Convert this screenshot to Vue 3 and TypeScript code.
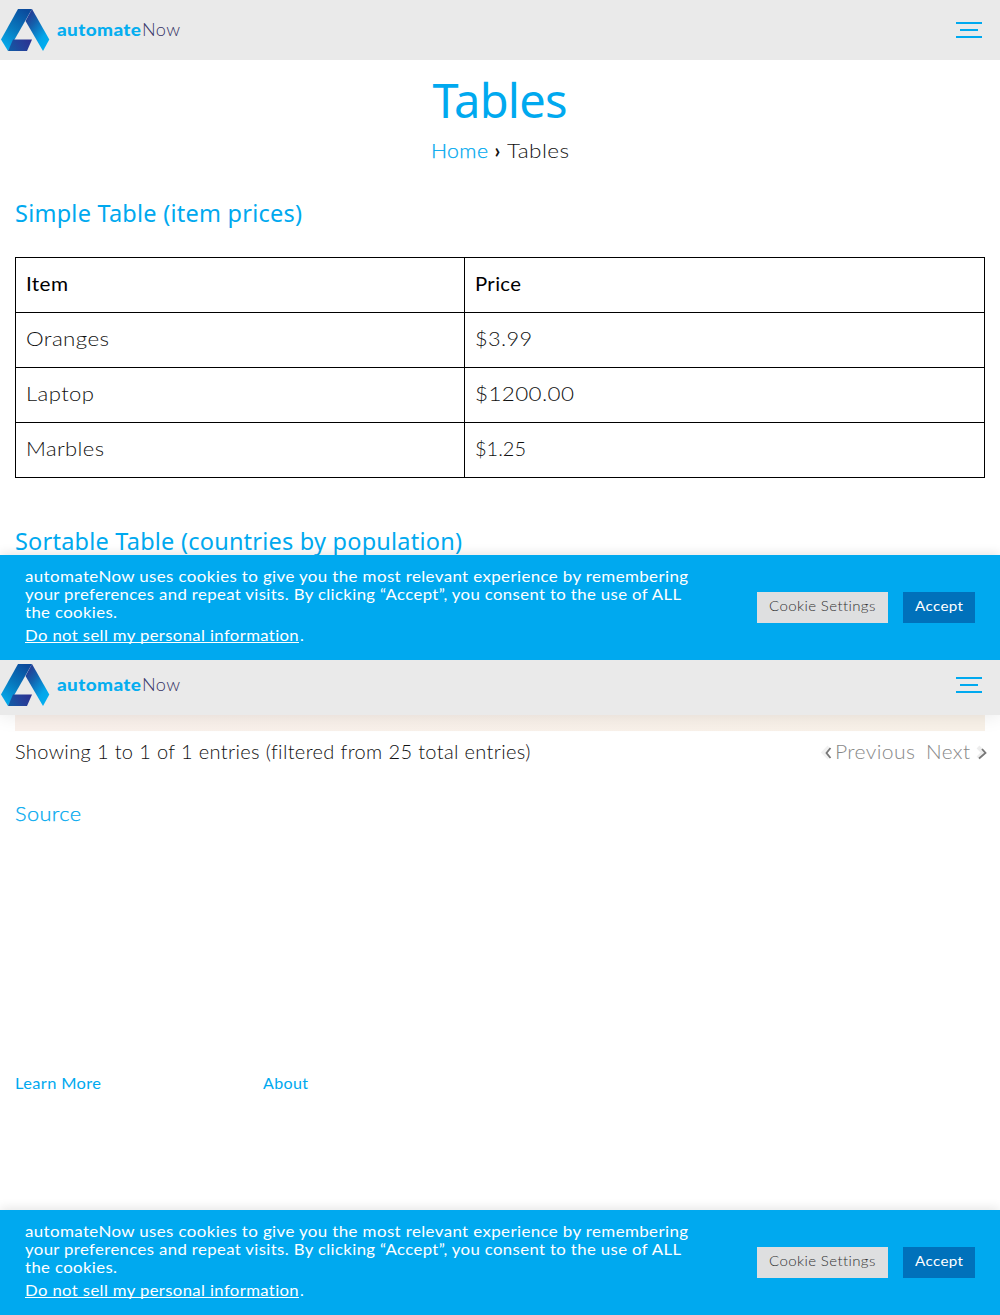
<script setup lang="ts">
import type { Directive } from 'vue'

interface Row {
  item: string
  itemWidth: number
  price: string
  priceWidth: number
}

// Widens a line of text to the given width in pixels: a little tracking first,
// then wider letterforms for whatever is left.
const MAX_TRACKING = 0.35
const vTrack: Directive<HTMLElement, number> = {
  mounted(el, { value }) {
    const count = (el.textContent ?? '').length
    const natural = el.getBoundingClientRect().width
    const spacing = Math.min(MAX_TRACKING, (value - natural) / Math.max(1, count - 1))
    const drawn = natural + spacing * (count - 1)
    el.style.letterSpacing = `${spacing}px`
    el.style.transform = `scaleX(${value / drawn})`
    el.style.marginRight = `${value - natural - spacing * count}px`
  },
}

const rows: Row[] = [
  { item: 'Oranges', itemWidth: 83, price: '$3.99', priceWidth: 57 },
  { item: 'Laptop', itemWidth: 68, price: '$1200.00', priceWidth: 99 },
  { item: 'Marbles', itemWidth: 78, price: '$1.25', priceWidth: 51 },
]

const notice = [
  { text: 'automateNow uses cookies to give you the most relevant experience by remembering', width: 663 },
  { text: 'your preferences and repeat visits. By clicking “Accept”, you consent to the use of ALL', width: 656 },
  { text: 'the cookies.', width: 92 },
]

const views = ['top', 'bottom'] as const
</script>

<template>
  <div class="page">
    <section v-for="view in views" :key="view" class="view" :class="view">
      <header class="bar">
        <a class="brand">
          <svg class="mark" width="50" height="44" viewBox="0 0 50 44">
            <defs>
              <linearGradient :id="view + '-l'" x1=".75" y1="0" x2=".2" y2="1">
                <stop offset="0" stop-color="#0b4a9c" />
                <stop offset=".5" stop-color="#0878bd" />
                <stop offset="1" stop-color="#04aeef" />
              </linearGradient>
              <linearGradient :id="view + '-r'" x1=".1" y1="0" x2=".8" y2="1">
                <stop offset="0" stop-color="#2b2f8c" />
                <stop offset=".35" stop-color="#1460ac" />
                <stop offset=".75" stop-color="#03a5e9" />
                <stop offset="1" stop-color="#00b0f2" />
              </linearGradient>
              <linearGradient :id="view + '-b'" x1="0" y1=".6" x2="1" y2=".3">
                <stop offset="0" stop-color="#125aa5" />
                <stop offset=".5" stop-color="#23439b" />
                <stop offset="1" stop-color="#2b3291" />
              </linearGradient>
            </defs>
            <path d="M18 1h14L8 43 1 31.500z" :fill="`url(#${view}-l)`" />
            <path d="M32 1 49.300 31.500 43 43 25.500 13z" :fill="`url(#${view}-r)`" />
            <path d="M13 31.500h19L27 43H8z" :fill="`url(#${view}-b)`" />
          </svg>
          <span class="name"><b v-track="84" class="t">automate</b><i v-track="38" class="t">Now</i></span>
        </a>
        <button class="menu" aria-label="Menu"><span /><span /><span /></button>
      </header>

      <main v-if="view === 'top'">
        <h1><span v-track="135" class="t">Tables</span></h1>
        <nav class="crumbs">
          <a v-track="57" class="t light">Home</a><span class="sep">›</span><span v-track="62" class="t">Tables</span>
        </nav>
        <h2 class="first"><span v-track="287" class="t">Simple Table (item prices)</span></h2>
        <table>
          <tbody>
            <tr>
              <th><span v-track="42" class="t">Item</span></th>
              <th><span v-track="46" class="t">Price</span></th>
            </tr>
            <tr v-for="row in rows" :key="row.item">
              <td><span v-track="row.itemWidth" class="t">{{ row.item }}</span></td>
              <td><span v-track="row.priceWidth" class="t">{{ row.price }}</span></td>
            </tr>
          </tbody>
        </table>
        <h2><span v-track="447" class="t">Sortable Table (countries by population)</span></h2>
      </main>

      <main v-else>
        <div class="stripe" />
        <div class="table-foot">
          <span v-track="515" class="t">Showing 1 to 1 of 1 entries (filtered from 25 total entries)</span>
          <div class="pager">
            <svg width="12" height="16" viewBox="0 0 12 16" fill="none">
              <path d="M8 2 2.500 7.500 8 13" stroke="#f1f1f1" stroke-width="4" />
              <path d="M9.500 3 5.500 8l4 5" stroke="#777" stroke-width="1.800" />
            </svg>
            <span v-track="80" class="t prev">Previous</span>
            <span v-track="44" class="t next">Next</span>
            <svg width="12" height="16" viewBox="0 0 12 16" fill="none">
              <path d="m3 2 5.500 5.500L3 13" stroke="#ededed" stroke-width="4" />
              <path d="m7 4 3.500 4L4 13.500" stroke="#777" stroke-width="1.800" />
            </svg>
          </div>
        </div>
        <div class="source"><a v-track="66" class="t light">Source</a></div>
        <footer>
          <a v-track="86" class="t">Learn More</a>
          <a v-track="45" class="t">About</a>
        </footer>
      </main>

      <aside class="cookies">
        <div class="copy">
          <div v-for="line in notice" :key="line.text" class="line">
            <span v-track="line.width" class="t">{{ line.text }}</span>
          </div>
          <div class="line optout">
            <a><span v-track="274" class="t">Do not sell my personal information</span></a><span class="dot">.</span>
          </div>
        </div>
        <div class="actions">
          <button class="settings"><span v-track="106" class="t">Cookie Settings</span></button>
          <button class="accept"><span v-track="48" class="t">Accept</span></button>
        </div>
      </aside>
    </section>
  </div>
</template>

<style>
body {
  margin: 0;
  background: #fff;
}
</style>

<style scoped>
* {
  box-sizing: border-box;
}
.page {
  width: 1000px;
  height: 1315px;
  overflow: hidden;
  font-family: Lato, "Liberation Sans", sans-serif;
  font-size: 20px;
  font-weight: 300;
  line-height: 30px;
  color: #111;
}
.view {
  display: flex;
  flex-direction: column;
  overflow: hidden;
}
.top {
  height: 660px;
}
.bottom {
  height: 655px;
}
main {
  flex: 1;
  min-height: 0;
  padding: 0 15px;
}
.t {
  display: inline-block;
  white-space: nowrap;
  transform-origin: 0 50%;
}
a {
  color: #00a9ef;
}
.light {
  -webkit-text-stroke: 0.25px #00a9ef;
}
.bar {
  flex: none;
  height: 60px;
  display: flex;
  align-items: flex-start;
  justify-content: space-between;
  background: #eaeaea;
  padding: 8px 18px 0 0;
}
.bottom .bar {
  height: 55px;
  padding-top: 3px;
  box-shadow: 0 0 20px rgba(0, 0, 0, 0.1);
  position: relative;
}
.brand {
  display: flex;
}
.mark {
  display: block;
}
.name {
  margin: 7px 0 0 7px;
  font-size: 17px;
  line-height: 30px;
  display: flex;
}
.name b {
  font-weight: 900;
  color: #05aef0;
}
.name i {
  font-style: normal;
  font-weight: 300;
  color: #363567;
  margin-left: 1px;
}
.menu {
  width: 26px;
  margin-top: 14px;
  padding: 0;
  border: 0;
  background: none;
  display: flex;
  flex-direction: column;
  align-items: center;
  gap: 5px;
}
.menu span {
  width: 26px;
  height: 2px;
  background: #00a9ef;
}
.menu span:nth-child(2) {
  width: 18px;
}
h1,
h2 {
  margin: 0;
  font-family: "Noto Sans", sans-serif;
  font-weight: 400;
  color: #00a9ef;
}
h1 {
  font-size: 47px;
  line-height: 60px;
  padding-top: 10px;
  text-align: center;
}
.crumbs {
  margin-top: 5px;
  display: flex;
  justify-content: center;
}
.sep {
  width: 20px;
  text-align: center;
  font-weight: 700;
}
h2 {
  font-size: 23.5px;
  line-height: 30px;
  margin-top: 48px;
}
h2.first {
  margin-top: 33px;
}
table {
  width: 970px;
  margin-top: 29px;
  border-collapse: collapse;
  table-layout: fixed;
}
th,
td {
  height: 55px;
  border: 1px solid #000;
  padding: 0 0 4px 10px;
  line-height: 50px;
  text-align: left;
}
th {
  font-weight: 400;
  color: #000;
}
th:first-child {
  width: 449px;
}
.cookies {
  flex: none;
  height: 105px;
  padding: 12px 25px 0;
  display: flex;
  justify-content: space-between;
  align-items: flex-start;
  background: #00a9ef;
  box-shadow: 0 -2px 10px rgba(0, 0, 0, 0.1);
  position: relative;
  color: #fff;
  font-size: 16px;
  font-weight: 400;
}
.line {
  height: 18px;
  line-height: 18px;
}
.optout {
  margin-top: 5px;
  display: flex;
}
.optout a {
  color: #fff;
  text-decoration: none;
  height: 17px;
  width: 274px;
  border-bottom: 1px solid #fff;
}
.dot {
  margin-left: 1px;
}
.actions {
  display: flex;
  gap: 15px;
  margin-top: 25px;
}
.actions button {
  height: 31px;
  padding: 0 12px 3px;
  border: 0;
  font-family: inherit;
  font-size: 14px;
  line-height: 28px;
  text-align: left;
}
.settings {
  width: 131px;
  background: #dedfe0;
  color: #333;
  font-weight: 300;
}
.accept {
  width: 72px;
  background: #0071bb;
  color: #fff;
  font-weight: 400;
}
.stripe {
  height: 16px;
  background: linear-gradient(90deg, #f9f0eb, #f8f1e8);
}
.table-foot {
  display: flex;
  justify-content: space-between;
  margin: 5px -2px 0 0;
}
.pager {
  display: flex;
  color: #888;
}
.pager svg {
  margin-top: 9px;
}
.prev {
  margin-left: 2px;
}
.next {
  margin-left: 11px;
}
.pager svg:last-child {
  margin-left: 5px;
}
.source {
  margin-top: 32px;
}
footer {
  display: grid;
  grid-template-columns: 248px 248px;
  justify-items: start;
  margin-top: 240px;
  font-size: 16px;
  font-weight: 400;
}
</style>
